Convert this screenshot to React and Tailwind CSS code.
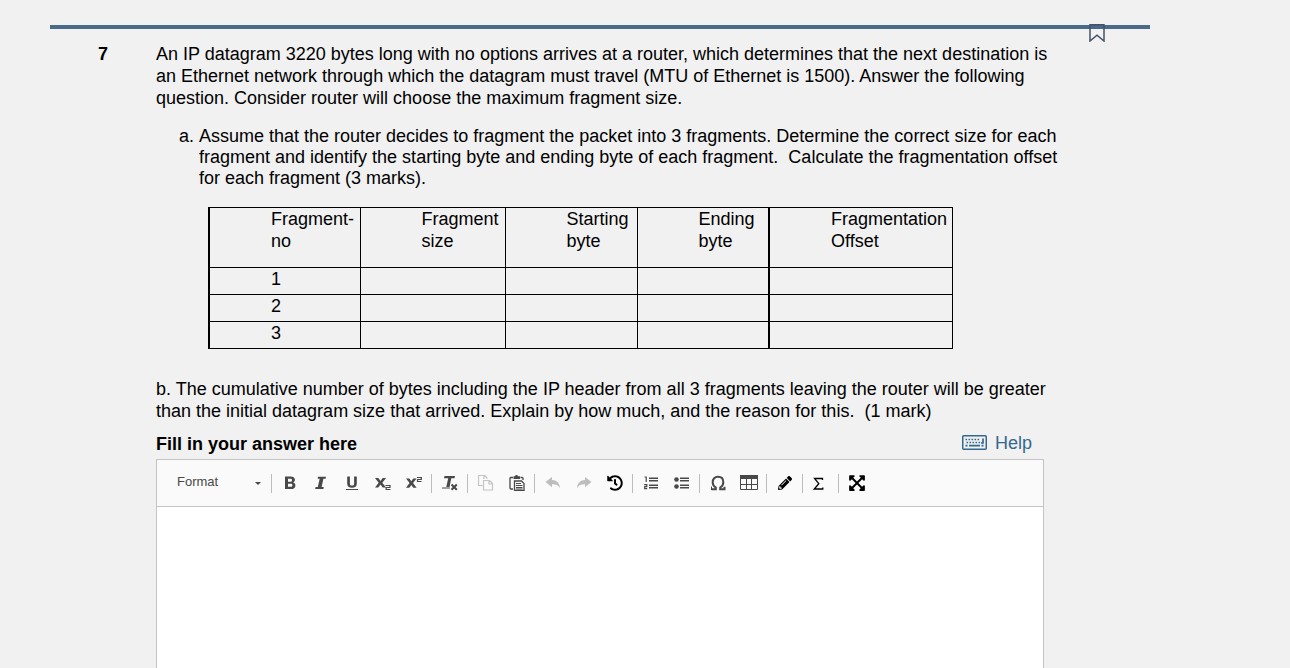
import React from "react";
import { FaHistory, FaPencilAlt, FaExpandArrowsAlt } from "react-icons/fa";

const headers = [
  ["Fragment-", "no"],
  ["Fragment", "size"],
  ["Starting", "byte"],
  ["Ending", "byte"],
  ["Fragmentation", "Offset"],
];

function Icon({ children, className = "size-4 text-[#484848]" }) {
  return (
    <svg viewBox="0 0 16 16" fill="currentColor" aria-hidden="true" className={className}>
      {children}
    </svg>
  );
}

const Lines = ({ y }) => (
  <g>
    <rect x="6" y={y} width="9" height="1.500" />
    <rect x="6" y={y + 2.500} width="9" height="1.500" />
  </g>
);

const icons = {
  bold: (
    <Icon>
      <path fillRule="evenodd" d="M3 1.500h5.600c2.900 0 4.300 1.300 4.300 3.300 0 1.300-.7 2.300-1.900 2.700 1.500.3 2.400 1.400 2.400 2.900 0 2.400-1.700 3.600-4.700 3.600H3zM6 3.800v2.900h2.200c1.200 0 1.800-.4 1.800-1.500 0-.9-.6-1.400-1.800-1.400zM6 8.800v2.900h2.500c1.300 0 1.900-.5 1.900-1.500 0-.9-.6-1.400-1.900-1.400z" />
    </Icon>
  ),
  italic: (
    <Icon>
      <path d="M5 1.800h8l-.4 1.900h-2.200L8.600 12.100h2.200l-.4 1.900H2.200l.4-1.900h2.200L6.700 3.700H4.600z" />
    </Icon>
  ),
  underline: (
    <Icon>
      <path d="M3.200 1.500h2.700v6.900c0 1.500.7 2.200 2.100 2.200s2.100-.7 2.100-2.200V1.500h2.700v7c0 2.900-1.800 4.300-4.800 4.300S3.200 11.400 3.200 8.500z" />
      <rect x="2" y="14" width="12" height="1" />
    </Icon>
  ),
  subscript: (
    <Icon>
      <path d="M0 3h3.300l2.200 2.900L7.700 3H11L7.300 7.700l3.700 4.700H7.700L5.500 9.500l-2.200 2.900H0l3.700-4.700z" />
      <path d="M10.500 10.500h4.500v2h-3.800v2h4.300" fill="none" stroke="currentColor" strokeWidth="1.200" />
    </Icon>
  ),
  superscript: (
    <Icon>
      <path d="M0 3.500h3.300l2 2.800 2-2.800h3.300L7 8l3.600 4.700H7.300l-2-2.800-2 2.800H0L3.600 8z" />
      <path d="M11 2.500h4.300v2h-3.800v2h4" fill="none" stroke="currentColor" strokeWidth="1.200" />
    </Icon>
  ),
  clear: (
    <Icon>
      <path d="M2.500 1h10.500l-.5 2.300H9.300L7.500 12H4.300l1.900-8.700H2z" />
      <rect x="0" y="12.500" width="8" height="1" />
      <path d="M9.500 9.500l5.300 5.300m0-5.300l-5.300 5.300" stroke="currentColor" strokeWidth="2" />
    </Icon>
  ),
  copy: (
    <Icon className="size-4 text-[#c4c4c4]">
      <path d="M4.500 10.500h-4v-10h6l3 3M5.500 5.500h6l3 3v6.500h-9zM11 5.500v3.500h3.500M6 .5V4" fill="none" stroke="currentColor" strokeWidth="1.200" />
    </Icon>
  ),
  paste: (
    <Icon>
      <path d="M4 2.500H1.800Q1 2.500 1 3.500v9.500q0 1 1 1h2M11.500 2.500h1.700q.8 0 .8 1V5" fill="none" stroke="currentColor" strokeWidth="1.300" />
      <path d="M4.500 1.300H6Q6.200 0 7.500 0T9 1.300h2V4H4.500z" />
      <path d="M5.500 6h7l2.500 2.500v7H5.500z" fill="none" stroke="currentColor" strokeWidth="1.300" />
      <path d="M7 8.500h5M7 10.500h6.500M7 12.500h6.500M7 14h6.500" stroke="currentColor" strokeWidth="1" />
    </Icon>
  ),
  undo: (
    <Icon className="size-4 text-[#bdbdbd]">
      <path d="M.5 7L7 2v3c4.500.2 7.500 2.800 8.200 8.500C13.500 10.200 11 9.300 7 9.300v3z" />
    </Icon>
  ),
  redo: (
    <Icon className="size-4 text-[#bdbdbd]">
      <path d="M15.500 7L9 2v3C4.500 5.200 1.500 7.800.8 13.500 2.500 10.200 5 9.300 9 9.300v3z" />
    </Icon>
  ),
  history: <FaHistory className="size-4 text-black" aria-hidden="true" />,
  ordered: (
    <Icon>
      <path d="M1.500 2h1.700v5M1.200 9.700h2.600v1.900H1.700v2.100H4.200" fill="none" stroke="currentColor" strokeWidth="1.200" />
      <Lines y={2.500} />
      <Lines y={9.500} />
    </Icon>
  ),
  bulleted: (
    <Icon>
      <circle cx="2.500" cy="4.500" r="2.300" />
      <circle cx="2.500" cy="11.500" r="2.300" />
      <Lines y={2.500} />
      <Lines y={9.500} />
    </Icon>
  ),
  omega: (
    <Icon>
      <path d="M1.500 14.200h4.300v-1.700C3.700 11.300 2.700 9.600 2.700 7.200 2.700 3.900 4.800 1.800 8 1.800s5.300 2.100 5.300 5.400c0 2.400-1 4.100-3.100 5.300v1.700h4.300v-2.500" fill="none" stroke="currentColor" strokeWidth="2" />
      <path d="M1 11.500h1v3.600H1z" />
    </Icon>
  ),
  table: (
    <svg viewBox="0 0 18 16" fill="currentColor" aria-hidden="true" className="h-4 w-[18px] text-[#484848]">
      <rect y="0" width="18" height="4" />
      <path d="M.5 4v10.500h17V4M.5 9.500h17M6.500 4v10.500M11.500 4v10.500" fill="none" stroke="currentColor" />
    </svg>
  ),
  pencil: <FaPencilAlt className="size-3.5 text-black" aria-hidden="true" />,
  sigma: (
    <Icon className="size-4 text-black">
      <path d="M9.500 5V3.500H1.500L5.800 8.700 1.300 14h8.500v-1.500" fill="none" stroke="currentColor" strokeWidth="1.300" />
    </Icon>
  ),
  expand: <FaExpandArrowsAlt className="size-[18px] text-black" aria-hidden="true" />,
};

const groups = [
  [["Bold", "bold"], ["Italic", "italic"], ["Underline", "underline"], ["Subscript", "subscript"], ["Superscript", "superscript"]],
  [["Remove format", "clear"]],
  [["Copy", "copy"], ["Paste", "paste"]],
  [["Undo", "undo"], ["Redo", "redo"], ["History", "history"]],
  [["Numbered list", "ordered"], ["Bulleted list", "bulleted"]],
  [["Special character", "omega"], ["Table", "table"]],
  [["Draw", "pencil"]],
  [["Math", "sigma"]],
  [["Maximize", "expand"]],
];

function Toolbar() {
  return (
    <div role="toolbar" aria-label="Editor" className="flex min-h-[47px] flex-wrap items-center border-b border-[#c4c4c4] bg-[#fafafa] pl-4">
      <div className="grid w-24 items-center">
        <select
          aria-label="Paragraph format"
          className="col-start-1 row-start-1 h-7 w-full appearance-none bg-transparent pl-1 pb-0.5 text-[13px] text-[#484848]"
        >
          <option>Format</option>
        </select>
        <svg viewBox="0 0 6 3" aria-hidden="true" className="pointer-events-none col-start-1 row-start-1 mr-2 h-[3px] w-1.5 justify-self-end">
          <path d="M0 0h6L3 3z" fill="#484848" />
        </svg>
      </div>
      {groups.map((group) => (
        <div key={group[0][1]} className="flex items-center">
          <span className="mx-0.5 h-[19px] w-px bg-[#bcbcbc]" />
          {group.map(([label, name]) => (
            <button key={name} type="button" aria-label={label} className="flex h-7 w-[31px] items-center justify-center">
              {icons[name]}
            </button>
          ))}
        </div>
      ))}
    </div>
  );
}

function KeyboardIcon() {
  return (
    <svg viewBox="0 0 25 15" aria-hidden="true" className="h-[15px] w-[25px]" fill="none" stroke="currentColor">
      <rect x=".75" y=".75" width="23.500" height="13.500" rx="1" strokeWidth="1.500" />
      <path d="M3.500 4.500h15M4.500 7.500h14" strokeWidth="1.600" strokeDasharray="1.600 1.400" />
      <path d="M21 3.500v4.500h-2M3.500 10.700h2M7 10.700h11M19.500 10.700h2" strokeWidth="1.700" />
    </svg>
  );
}

export default function App() {
  return (
    <div className="flex min-h-screen flex-col bg-[#f1f1f1] pl-[50px] pt-[25px] font-['Liberation_Sans',Arial,sans-serif] text-lg leading-[22px] text-black">
      <main className="flex w-full max-w-[1100px] flex-1 flex-col">
        <div className="relative h-1 bg-[#4a6a8a]">
          <button type="button" aria-label="Bookmark question" className="absolute -top-px right-[45px]">
            <svg viewBox="0 0 16 18" className="h-[18px] w-4" fill="none" stroke="#46506a" strokeWidth="1.500">
              <path d="M1 .8h14v16.200L8 11.200 1 17z" />
            </svg>
          </button>
        </div>

        <section className="flex flex-1 pl-12 pt-3.5">
          <h2 className="w-[58px] shrink-0 font-bold">7</h2>
          <div className="flex w-full max-w-[888px] flex-col">
            <p className="-mr-5">
              An IP datagram 3220 bytes long with no options arrives at a router, which determines that the next
              destination is an Ethernet network through which the datagram must travel (MTU of Ethernet is 1500).
              Answer the following question. Consider router will choose the maximum fragment size.
            </p>
            <ol className="-mr-5 mt-[17px] list-[lower-alpha] pl-[43px] leading-[21px]">
              <li>
                Assume that the router decides to fragment the packet into 3 fragments. Determine the correct size for
                each fragment and identify the starting byte and ending byte of each fragment.&nbsp; Calculate the
                fragmentation offset for each fragment (3 marks).
              </li>
            </ol>

            <table className="ml-[52px] mt-[18px] w-[745px] table-fixed border-collapse border border-l-2 border-black">
              <colgroup>
                <col className="w-[151px]" />
                <col className="w-[145px]" />
                <col className="w-[132px]" />
                <col className="w-[132px]" />
                <col />
              </colgroup>
              <thead>
                <tr className="h-[60px]">
                  {headers.map(([first, second], i) => (
                    <th
                      key={first}
                      scope="col"
                      className={`border border-black pl-[61px] text-left align-top font-normal ${i === 4 ? "border-l-2" : ""}`}
                    >
                      {first}
                      <br />
                      {second}
                    </th>
                  ))}
                </tr>
              </thead>
              <tbody>
                {[1, 2, 3].map((n) => (
                  <tr key={n} className="h-[27px]">
                    <td className="border border-black pl-[61px] align-top">{n}</td>
                    <td className="border border-black" />
                    <td className="border border-black" />
                    <td className="border border-black" />
                    <td className="border border-l-2 border-black" />
                  </tr>
                ))}
              </tbody>
            </table>

            <p className="-mr-5 mt-[29px]">
              b. The cumulative number of bytes including the IP header from all 3 fragments leaving the router will be
              greater than the initial datagram size that arrived. Explain by how much, and the reason for this.&nbsp; (1
              mark)
            </p>

            <div className="mt-2 flex items-center justify-between pb-1 pr-3">
              <label htmlFor="answer" className="pt-[3px] font-bold">
                Fill in your answer here
              </label>
              <a href="#help" className="flex items-center gap-2 text-[#34688f]">
                <KeyboardIcon />
                Help
              </a>
            </div>

            <div className="flex flex-1 flex-col border border-b-0 border-[#c4c4c4] bg-white">
              <Toolbar />
              <textarea id="answer" className="min-h-40 w-full flex-1 resize-none p-5 outline-none" />
            </div>
          </div>
        </section>
      </main>
    </div>
  );
}
